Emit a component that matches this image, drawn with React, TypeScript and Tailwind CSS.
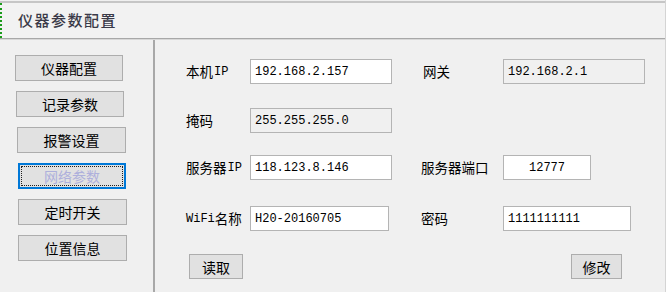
import React from "react";

const cjk = { fontFamily: '"Noto Sans CJK SC", "Noto Sans", sans-serif' };
const mono = { fontFamily: '"Liberation Mono", "Noto Sans CJK SC", monospace' };

function NavButton({ label, cls, focused }: { label: string; cls: string; focused?: boolean }) {
  if (focused) {
    return (
      <div className={`h-[26px] border-2 border-[#0078d7] bg-[#e1e1e1] p-[1px] ${cls}`}>
        <div
          className="flex h-full w-full items-center justify-center border border-dotted border-[#202020] text-[14px] leading-none text-[#aeb0dc]"
          style={cjk}
        >
          {label}
        </div>
      </div>
    );
  }
  return (
    <div
      className={`flex h-[26px] items-center justify-center border border-[#adadad] bg-[#e1e1e1] text-[14px] leading-none text-black ${cls}`}
      style={cjk}
    >
      {label}
    </div>
  );
}

function Label({ cn, ascii, w, order = "cn-first" }: { cn: string; ascii?: string; w: string; order?: string }) {
  return (
    <div className={`flex h-[25px] shrink-0 items-center text-black ${w}`}>
      {order === "ascii-first" && ascii ? (
        <span className="text-[12px] leading-none" style={mono}>{ascii}</span>
      ) : null}
      <span className="text-[13.5px] leading-none" style={cjk}>{cn}</span>
      {order === "cn-first" && ascii ? (
        <span className="ml-[1px] text-[12px] leading-none" style={mono}>{ascii}</span>
      ) : null}
    </div>
  );
}

function Field({ value, w, bg = "bg-white", center }: { value: string; w: string; bg?: string; center?: boolean }) {
  return (
    <div
      className={`flex h-[25px] shrink-0 items-center border border-[#b4b4b4] ${bg} ${w} ${center ? "justify-center" : "pl-[4px]"} text-[12px] leading-none text-black`}
      style={mono}
    >
      {value}
    </div>
  );
}

function ActionButton({ label, w }: { label: string; w: string }) {
  return (
    <div
      className={`flex h-[25px] items-center justify-center border border-[#adadad] bg-[#e1e1e1] text-[14px] leading-none text-black ${w}`}
      style={cjk}
    >
      {label}
    </div>
  );
}

export default function App() {
  return (
    <div className="relative h-[292px] w-[666px] overflow-hidden bg-[#f0f0f0]">
      <div className="flex h-full w-[666px] flex-col border-r border-[#d4d4d4]">
        <div className="mt-[1px] h-[2px] w-full shrink-0 bg-[#c6c6c6]" />
        <div className="flex h-[35px] shrink-0 items-center border-l-2 border-dotted border-[#1a9a1a] bg-[#f2f2f2] pl-[16px]">
          <span className="text-[15px] font-medium tracking-[1.5px] text-[#3a3a48]" style={cjk}>
            仪器参数配置
          </span>
        </div>
        <div className="h-[1px] w-full shrink-0 bg-[#a8a8a8]" />
        <div className="h-[1px] w-full shrink-0 bg-[#d8d8d8]" />
        <div className="flex min-h-0 flex-1">
          <div className="flex w-[153px] shrink-0 flex-col gap-[10px] pt-[15px]">
            <NavButton label="仪器配置" cls="ml-[15px] w-[108px]" />
            <NavButton label="记录参数" cls="ml-[16px] w-[108px]" />
            <NavButton label="报警设置" cls="ml-[17px] w-[109px]" />
            <NavButton label="网络参数" cls="ml-[18px] w-[108px]" focused />
            <NavButton label="定时开关" cls="ml-[18px] w-[109px]" />
            <NavButton label="位置信息" cls="ml-[18px] w-[109px]" />
          </div>
          <div className="w-[2px] shrink-0 bg-[#a8a8a8]" />
          <div className="flex flex-1 flex-col pl-[31px] pt-[19px]">
            <div className="flex items-center">
              <Label cn="本机" ascii="IP" w="w-[64px]" />
              <Field value="192.168.2.157" w="w-[142px]" />
              <div className="w-[31px] shrink-0" />
              <Label cn="网关" w="w-[80px]" />
              <Field value="192.168.2.1" w="w-[142px]" bg="bg-[#f0f0f0]" />
            </div>
            <div className="mt-[24px] flex items-center">
              <Label cn="掩码" w="w-[64px]" />
              <Field value="255.255.255.0" w="w-[142px]" bg="bg-[#f0f0f0]" />
            </div>
            <div className="mt-[22px] flex items-center">
              <Label cn="服务器" ascii="IP" w="w-[64px]" />
              <Field value="118.123.8.146" w="w-[142px]" />
              <div className="w-[29px] shrink-0" />
              <Label cn="服务器端口" w="w-[82px]" />
              <Field value="12777" w="w-[88px]" center />
            </div>
            <div className="mt-[26px] flex items-center">
              <Label cn="名称" ascii="WiFi" order="ascii-first" w="w-[64px]" />
              <Field value="H20-20160705" w="w-[139px]" />
              <div className="w-[32px] shrink-0" />
              <Label cn="密码" w="w-[82px]" />
              <Field value="1111111111" w="w-[128px]" />
            </div>
            <div className="mt-[23px] flex items-center">
              <div className="ml-[3px]">
                <ActionButton label="读取" w="w-[54px]" />
              </div>
              <div className="ml-[328px]">
                <ActionButton label="修改" w="w-[51px]" />
              </div>
            </div>
          </div>
        </div>
      </div>
    </div>
  );
}
